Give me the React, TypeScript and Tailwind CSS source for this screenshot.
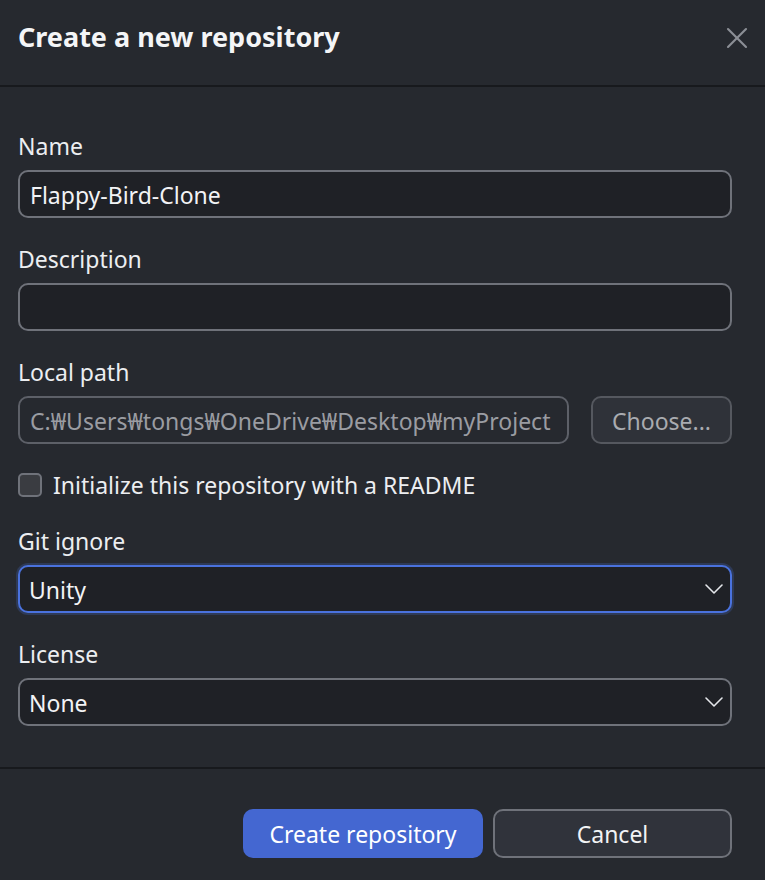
import { X, ChevronDown } from "lucide-react";

const font = { fontFamily: '"Noto Sans", "Noto Sans CJK KR", sans-serif' };

const Label = ({ text }: { text: string }) => (
  <div className="text-[23px] leading-none text-[#eceef1] mb-[12px]">{text}</div>
);

const Select = ({ value, focused }: { value: string; focused?: boolean }) => (
  <div
    className={
      "h-[48px] rounded-[10px] bg-[#1f2126] flex items-center justify-between pl-[9px] pr-0 text-[23px] text-[#f2f3f5] " +
      (focused
        ? "border-2 border-[#4a72de] ring-2 ring-[#2e3a57]"
        : "border-2 border-[#6f727a]")
    }
  >
    <span className="pt-[2px]">{value}</span>
    <ChevronDown className="w-[32px] h-[32px] text-[#e5e7eb]" strokeWidth={1.2} />
  </div>
);

export default function App() {
  return (
    <div className="w-[765px] h-[880px] bg-[#26292f] flex flex-col" style={font}>
      {/* header */}
      <div className="h-[87px] shrink-0 flex items-center justify-between pl-[18px] pr-[10px] border-b-2 border-[#17191d]">
        <h1 className="text-[27px] font-bold text-[#f4f5f7] -mt-[10px]">Create a new repository</h1>
        <X className="w-[36px] h-[36px] text-[#8c8f96] -mt-[10px]" strokeWidth={1.4} />
      </div>

      {/* body */}
      <div className="h-[682px] shrink-0 pl-[18px] pr-[33px] pt-[48px] border-b-2 border-[#17191d]">
        <Label text="Name" />
        <div className="h-[48px] rounded-[10px] border-2 border-[#6f727a] bg-[#1f2126] flex items-center px-[10px] pt-[2px] text-[23px] text-[#f2f3f5] mb-[30px]">
          Flappy-Bird-Clone
        </div>

        <Label text="Description" />
        <div className="h-[48px] rounded-[10px] border-2 border-[#6f727a] bg-[#1f2126] mb-[30px]" />

        <Label text="Local path" />
        <div className="flex gap-[22px] mb-[29px]">
          <div className="flex-1 h-[48px] rounded-[10px] border-2 border-[#5d6068] bg-[#26292f] flex items-center px-[10px] pt-[2px] text-[23px] text-[#9a9ca2] overflow-hidden whitespace-nowrap">
            C:₩Users₩tongs₩OneDrive₩Desktop₩myProject
          </div>
          <div className="w-[141px] shrink-0 h-[48px] rounded-[10px] border-2 border-[#55585f] bg-[#2f3239] flex items-center justify-center pt-[2px] text-[23px] text-[#a9abb0]">
            Choose...
          </div>
        </div>

        <div className="flex items-center gap-[11px] mb-[33px]">
          <div className="w-[24px] h-[24px] rounded-[5px] border-2 border-[#6f727a] bg-[#3a3c41]" />
          <span className="text-[23px] leading-none text-[#eceef1]">Initialize this repository with a README</span>
        </div>

        <Label text="Git ignore" />
        <div className="mb-[30px]">
          <Select value="Unity" focused />
        </div>

        <Label text="License" />
        <Select value="None" />
      </div>

      {/* footer */}
      <div className="flex-1 flex items-start justify-end gap-[10px] pr-[33px] pt-[40px]">
        <button className="w-[240px] h-[49px] rounded-[10px] bg-[#4467d1] pt-[2px] text-[23px] text-white">
          Create repository
        </button>
        <button className="w-[239px] h-[49px] rounded-[10px] border-2 border-[#6f727a] bg-[#30333b] pt-[2px] text-[23px] text-[#f2f3f5]">
          Cancel
        </button>
      </div>
    </div>
  );
}
